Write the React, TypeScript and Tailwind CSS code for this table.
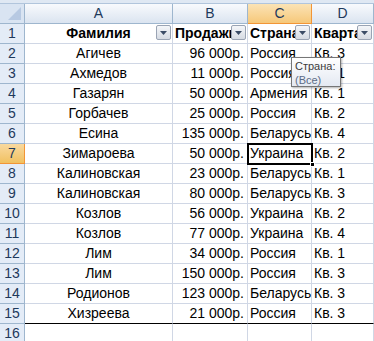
const rows: [string, string, string, string][] = [
  ["Агичев", "96 000р.", "Россия", "Кв. 3"],
  ["Ахмедов", "11 000р.", "Россия", "Кв. 1"],
  ["Газарян", "50 000р.", "Армения", "Кв. 1"],
  ["Горбачев", "25 000р.", "Россия", "Кв. 2"],
  ["Есина", "135 000р.", "Беларусь", "Кв. 4"],
  ["Зимароева", "50 000р.", "Украина", "Кв. 2"],
  ["Калиновская", "23 000р.", "Беларусь", "Кв. 1"],
  ["Калиновская", "80 000р.", "Беларусь", "Кв. 3"],
  ["Козлов", "56 000р.", "Украина", "Кв. 2"],
  ["Козлов", "77 000р.", "Украина", "Кв. 4"],
  ["Лим", "34 000р.", "Россия", "Кв. 1"],
  ["Лим", "150 000р.", "Россия", "Кв. 3"],
  ["Родионов", "123 000р.", "Беларусь", "Кв. 3"],
  ["Хизреева", "21 000р.", "Россия", "Кв. 3"],
];

const base = "relative h-[20px] shrink-0 overflow-hidden whitespace-nowrap border-r border-b leading-[19px]";
const cell = `${base} border-[#d0d7e5]`;
// last data row gets the table's black bottom edge
const lastCell = `${base} border-r-[#d0d7e5] border-b-black`;

function FilterButton() {
  return (
    <div className="absolute right-[1px] top-[1px] flex h-[15px] w-[15px] items-center justify-center rounded-[2px] border border-[#9aa4b4] bg-gradient-to-b from-[#f4f6f9] to-[#d6dbe3]">
      <svg width="7" height="4" viewBox="0 0 7 4">
        <path d="M0 0H7L3.5 4Z" fill="#3b4c66" />
      </svg>
    </div>
  );
}

function RowHeader({ n, active }: { n: number; active?: boolean }) {
  return (
    <div
      className={`h-[20px] w-[25px] shrink-0 border-r border-b text-center leading-[19px] ${
        active
          ? "border-[#f29536] bg-gradient-to-b from-[#f9d99f] to-[#f1c15f]"
          : "border-[#9eb6ce] bg-[#e4ecf7]"
      } text-[#1e395b]`}
    >
      {n}
    </div>
  );
}

export default function App() {
  return (
    <div
      className="relative h-[341px] w-[374px] overflow-hidden bg-white text-[14px] text-black"
      style={{ fontFamily: '"Liberation Sans", Arial, sans-serif' }}
    >
      <div className="h-[4px] border-b border-[#b1c5dc] bg-[#dfe8f3]" />
      {/* column headers */}
      <div className="flex h-[20px]">
        <div className="relative h-[20px] w-[25px] shrink-0 border-r border-b border-[#9eb6ce] bg-[#d9e4f2]">
          <svg className="absolute right-[3px] bottom-[3px]" width="13" height="13" viewBox="0 0 13 13">
            <path d="M13 0V13H0Z" fill="#b7c9e2" />
          </svg>
        </div>
        <div className="w-[148px] shrink-0 border-r border-b border-[#9eb6ce] bg-gradient-to-b from-[#f8fafd] to-[#dbe4f0] text-center leading-[19px] text-[#1e395b]">A</div>
        <div className="w-[75px] shrink-0 border-r border-b border-[#9eb6ce] bg-gradient-to-b from-[#f8fafd] to-[#dbe4f0] text-center leading-[19px] text-[#1e395b]">B</div>
        <div className="w-[64px] shrink-0 border-r border-b border-[#f29536] bg-gradient-to-b from-[#fbe3b5] to-[#f6c879] text-center leading-[19px] text-[#1e395b]">C</div>
        <div className="w-[62px] shrink-0 border-r border-b border-[#9eb6ce] bg-gradient-to-b from-[#f8fafd] to-[#dbe4f0] text-center leading-[19px] text-[#1e395b]">D</div>
      </div>
      {/* header row */}
      <div className="flex">
        <RowHeader n={1} />
        <div className={`${cell} w-[148px] text-center font-bold`}>
          Фамилия
          <FilterButton />
        </div>
        <div className={`${cell} w-[75px] pl-[2px] font-bold`}>
          Продажи
          <FilterButton />
        </div>
        <div className={`${cell} w-[64px] pl-[2px] font-bold`}>
          Страна
          <FilterButton />
        </div>
        <div className={`${cell} w-[62px] pl-[2px] font-bold`}>
          Квартал
          <FilterButton />
        </div>
      </div>
      {rows.map((r, i) => {
        const n = i + 2;
        const c = n === 15 ? lastCell : cell;
        return (
          <div key={n} className="flex">
            <RowHeader n={n} active={n === 7} />
            <div className={`${c} w-[148px] text-center`}>{r[0]}</div>
            <div className={`${c} w-[75px] pr-[3px] text-right`}>{r[1]}</div>
            <div className={`${c} w-[64px] pl-[2px]`}>{r[2]}</div>
            <div className={`${c} w-[62px] pl-[2px]`}>{r[3]}</div>
          </div>
        );
      })}
      <div className="flex">
        <RowHeader n={16} />
        <div className={`${cell} w-[148px]`} />
        <div className={`${cell} w-[75px]`} />
        <div className={`${cell} w-[64px]`} />
        <div className={`${cell} w-[62px]`} />
      </div>
      {/* active cell C7 */}
      <div className="absolute left-[247px] top-[143px] h-[22px] w-[66px] border-2 border-black" />
      <div className="absolute left-[310px] top-[162px] h-[5px] w-[5px] border border-white bg-black" />
      {/* filter tooltip */}
      <div className="absolute left-[291px] top-[57px] h-[30px] w-[50px] border border-[#767676] bg-gradient-to-b from-white to-[#e4e9f2] px-[3px] pt-[1px] text-[11px] leading-[14px] shadow-[1px_1px_2px_rgba(0,0,0,0.3)]">
        <div className="text-[#3c3c3c]">Страна:</div>
        <div className="text-[#5b6b86]">(Все)</div>
      </div>
    </div>
  );
}
